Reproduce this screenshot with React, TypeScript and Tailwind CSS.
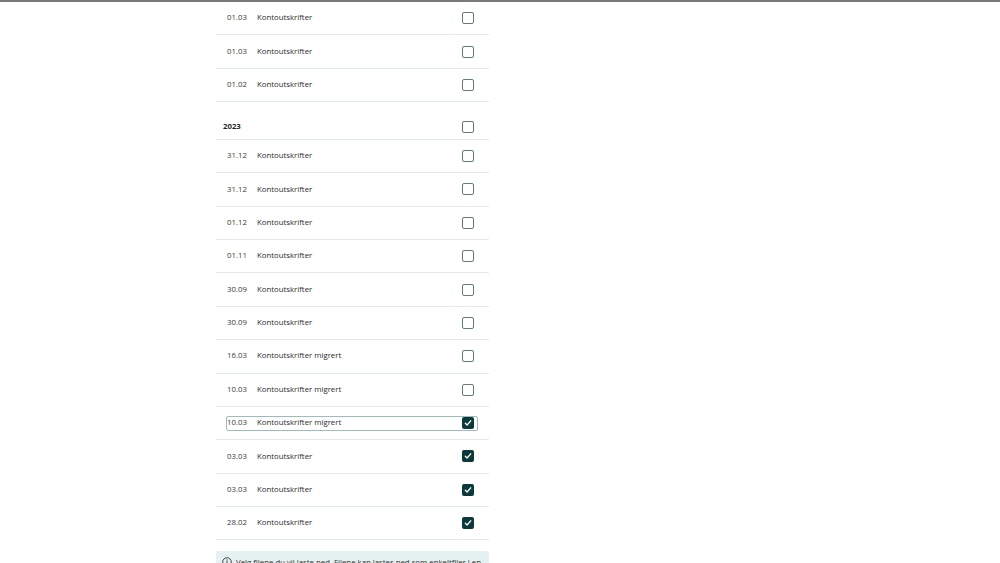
import React from 'react';

type Row = { date: string; title: string; checked?: boolean; focused?: boolean };

const firstRows: Row[] = [
  { date: '01.03', title: 'Kontoutskrifter' },
  { date: '01.03', title: 'Kontoutskrifter' },
  { date: '01.02', title: 'Kontoutskrifter' },
];

const rows2023: Row[] = [
  { date: '31.12', title: 'Kontoutskrifter' },
  { date: '31.12', title: 'Kontoutskrifter' },
  { date: '01.12', title: 'Kontoutskrifter' },
  { date: '01.11', title: 'Kontoutskrifter' },
  { date: '30.09', title: 'Kontoutskrifter' },
  { date: '30.09', title: 'Kontoutskrifter' },
  { date: '16.03', title: 'Kontoutskrifter migrert' },
  { date: '10.03', title: 'Kontoutskrifter migrert' },
  { date: '10.03', title: 'Kontoutskrifter migrert', checked: true, focused: true },
  { date: '03.03', title: 'Kontoutskrifter', checked: true },
  { date: '03.03', title: 'Kontoutskrifter', checked: true },
  { date: '28.02', title: 'Kontoutskrifter', checked: true },
];

// Checkbox box, empty or filled with a check mark
const Check = ({ checked = false }: { checked?: boolean }) =>
  checked ? (
    <div className="w-[12px] h-[12px] rounded-[2px] bg-[#0c3a3c] flex items-center justify-center">
      <svg width="8" height="8" viewBox="0 0 8 8" fill="none">
        <path d="M1.3 4.3 L3.1 6 L6.7 1.8" stroke="white" strokeWidth="1.3" strokeLinecap="round" strokeLinejoin="round" />
      </svg>
    </div>
  ) : (
    <div className="w-[12px] h-[12px] rounded-[2px] border border-[#5f7d7b] bg-white" />
  );

const FileRow = ({ row }: { row: Row }) => (
  <div className="h-[33.4px] border-b border-[#e4ebeb] flex items-center">
    <div
      className={`ml-[10px] mr-[11px] flex-1 h-[15px] flex items-center rounded-[2px] border ${
        row.focused ? 'border-[#9cbdbd]' : 'border-transparent'
      }`}
    >
      <div className="w-[30px] text-[7.8px] text-[#3a3a3a]">{row.date}</div>
      <div className="flex-1 text-[7.8px] text-[#2a2a2a]">{row.title}</div>
      <div className="mr-[3px]">
        <Check checked={row.checked} />
      </div>
    </div>
  </div>
);

const App: React.FC = () => {
  return (
    <div className="w-[1000px] h-[563px] overflow-hidden bg-white" style={{ fontFamily: '"Open Sans", "Noto Sans", sans-serif' }}>
      <div className="h-[2px] bg-[#7a7a7a]" />
      <div className="ml-[216px] w-[273px]">
        {firstRows.map((r, i) => (
          <FileRow key={i} row={r} />
        ))}

        {/* year header */}
        <div className="h-[37.6px] border-b border-[#e4ebeb] flex items-end pb-[6px] pl-[7px] pr-[15px]">
          <div className="flex-1 flex items-center h-[12px]">
            <div className="text-[7.8px] font-bold text-[#1f1f1f]">2023</div>
          </div>
          <Check />
        </div>

        {rows2023.map((r, i) => (
          <FileRow key={i} row={r} />
        ))}

        {/* info box */}
        <div className="mt-[11px] bg-[#e5f1f1] rounded-[2px] px-[6px] pt-[5px] pb-[8px] flex gap-[4px] items-start">
          <svg width="10" height="10" viewBox="0 0 10 10" fill="none" className="mt-[1px] shrink-0">
            <circle cx="5" cy="5" r="4.3" stroke="#333" strokeWidth="0.9" />
            <path d="M5 4.3 V7.3" stroke="#333" strokeWidth="0.9" strokeLinecap="round" />
            <circle cx="5" cy="2.9" r="0.55" fill="#333" />
          </svg>
          <div className="text-[7.8px] leading-[12px] text-[#2e2e2e]">
            Velg filene du vil laste ned. Filene kan lastes ned som enkeltfiler i en zip-fil.
          </div>
        </div>
      </div>
    </div>
  );
};

export default App;
